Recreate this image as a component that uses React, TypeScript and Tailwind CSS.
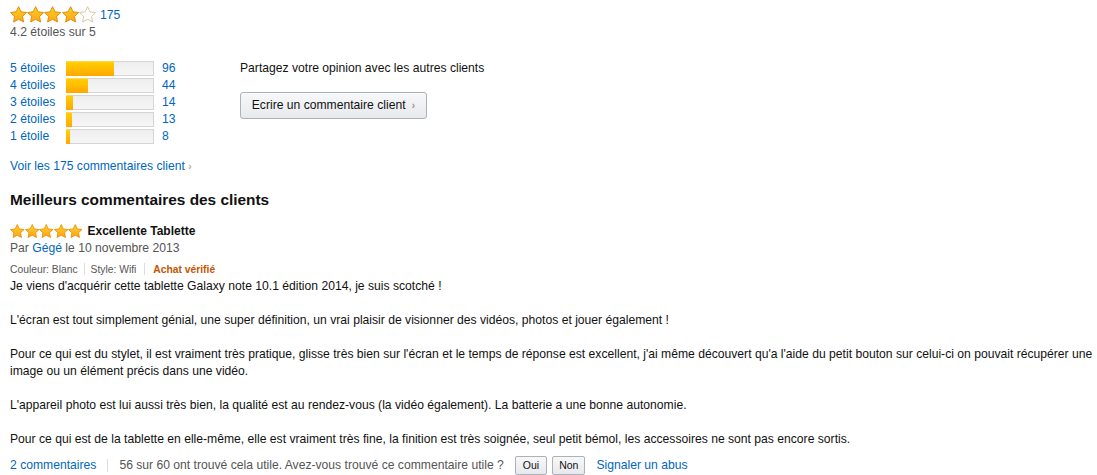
import React from "react";

const STAR = "M12 1.6l3.1 6.6 7.2.9-5.3 5 1.4 7.1L12 17.7l-6.4 3.5 1.4-7.1-5.3-5 7.2-.9z";

function Star({ size, filled, id }: { size: number; filled: boolean; id: string }) {
  return (
    <svg width={size} height={size} viewBox="1 1 22 21.5" className="block">
      <defs>
        <linearGradient id={id} x1="0" y1="0" x2="0" y2="1">
          <stop offset="0" stopColor="#ffd21f" />
          <stop offset="1" stopColor="#ffa41c" />
        </linearGradient>
      </defs>
      {filled ? (
        <path d={STAR} fill={`url(#${id})`} stroke="#e08a00" strokeWidth="1.2" strokeLinejoin="round" />
      ) : (
        <path d={STAR} fill="#ffffff" stroke="#d6c39a" strokeWidth="1.2" strokeLinejoin="round" />
      )}
    </svg>
  );
}

function Stars({ count, size, prefix }: { count: number; size: number; prefix: string }) {
  return (
    <div className="flex items-center">
      {[0, 1, 2, 3, 4].map((i) => (
        <Star key={i} size={size} filled={i < count} id={`${prefix}${i}`} />
      ))}
    </div>
  );
}

const rows = [
  { label: "5 étoiles", fill: 48, count: 96 },
  { label: "4 étoiles", fill: 22, count: 44 },
  { label: "3 étoiles", fill: 7, count: 14 },
  { label: "2 étoiles", fill: 6, count: 13 },
  { label: "1 étoile", fill: 4, count: 8 },
];

export default function App() {
  return (
    <div
      className="w-[1097px] h-[475px] bg-white text-[#111] overflow-hidden pl-[10px] pt-[6px] text-[12.15px] leading-[17px]"
      style={{ fontFamily: '"Liberation Sans", Arial, sans-serif' }}
    >
      <div className="flex items-center h-[18px]">
        <Stars count={4} size={17.2} prefix="t" />
        <a className="text-[#0066c0] ml-[4px]">175</a>
      </div>
      <div className="text-[#555] h-[17px]">4.2 étoiles sur 5</div>

      <div className="flex mt-[19px]">
        <div className="w-[230px]">
          {rows.map((r) => (
            <div key={r.label} className="flex items-center h-[17px]">
              <span className="w-[56px] text-[#0066c0]">{r.label}</span>
              <div className="relative w-[88px] h-[15px] border border-[#d5d5d5] bg-gradient-to-b from-[#eeeeee] to-[#f6f6f6]">
                <div
                  className="absolute left-[-1px] top-[-1px] bottom-[-1px] bg-gradient-to-b from-[#ffce00] to-[#ffa700] border-t border-[#ffd94d]"
                  style={{ width: r.fill }}
                />
              </div>
              <span className="ml-[8px] text-[#0066c0]">{r.count}</span>
            </div>
          ))}
        </div>
        <div>
          <div className="h-[17px]">Partagez votre opinion avec les autres clients</div>
          <button className="mt-[15px] h-[27px] w-[187px] flex items-center justify-center border border-[#adb1b8] rounded-[3px] bg-gradient-to-b from-[#f7f8fa] to-[#e7e9ec] text-[#111] text-[12.15px] shadow-[inset_0_1px_0_rgba(255,255,255,0.6)]">
            Ecrire un commentaire client
            <span className="ml-[6px] text-[#999] text-[11px] font-bold">›</span>
          </button>
        </div>
      </div>

      <div className="mt-[13px] text-[#0066c0] h-[17px]">
        Voir les 175 commentaires client <span className="text-[#aaa] text-[10px] font-bold">›</span>
      </div>

      <h3 className="mt-[15px] text-[15.4px] font-bold leading-[20px] text-[#111]">Meilleurs commentaires des clients</h3>

      <div className="mt-[12px] flex items-center h-[18px]">
        <Stars count={5} size={14.5} prefix="r" />
        <span className="ml-[5px] font-bold text-[12px]">Excellente Tablette</span>
      </div>
      <div className="text-[#555] h-[17px]">
        Par <a className="text-[#0066c0]">Gégé</a> le 10 novembre 2013
      </div>
      <div className="flex items-center mt-[5px] h-[14px] text-[10.3px] text-[#555]">
        <span>Couleur: Blanc</span>
        <span className="mx-[6px] h-[12px] w-px bg-[#ddd]" />
        <span>Style: Wifi</span>
        <span className="mx-[8px] h-[12px] w-px bg-[#ddd]" />
        <span className="text-[#c45500] font-bold">Achat vérifié</span>
      </div>

      <div className="mt-[2px] text-[#111] w-[1087px]">
        <p className="h-[34px]">Je viens d'acquérir cette tablette Galaxy note 10.1 édition 2014, je suis scotché !</p>
        <p className="h-[34px]">
          L'écran est tout simplement génial, une super définition, un vrai plaisir de visionner des vidéos, photos et jouer également !
        </p>
        <p className="h-[51px]">
          Pour ce qui est du stylet, il est vraiment très pratique, glisse très bien sur l'écran et le temps de réponse est excellent, j'ai même découvert qu'a l'aide du petit bouton sur celui-ci on pouvait récupérer une image ou un élément précis dans une vidéo.
        </p>
        <p className="h-[34px]">
          L'appareil photo est lui aussi très bien, la qualité est au rendez-vous (la vidéo également). La batterie a une bonne autonomie.
        </p>
        <p className="h-[17px]">
          Pour ce qui est de la tablette en elle-même, elle est vraiment très fine, la finition est très soignée, seul petit bémol, les accessoires ne sont pas encore sortis.
        </p>
      </div>

      <div className="mt-[8px] flex items-center h-[18px]">
        <a className="text-[#0066c0]">2 commentaires</a>
        <span className="mx-[11px] h-[13px] w-px bg-[#ddd]" />
        <span className="text-[#555]">56 sur 60 ont trouvé cela utile. Avez-vous trouvé ce commentaire utile ?</span>
        <button className="ml-[11px] h-[19px] px-[7px] border border-[#adb1b8] rounded-[2px] bg-gradient-to-b from-[#f7f8fa] to-[#e7e9ec] text-[10.5px] text-[#111] leading-[17px]">
          Oui
        </button>
        <button className="ml-[5px] h-[19px] px-[6px] border border-[#adb1b8] rounded-[2px] bg-gradient-to-b from-[#f7f8fa] to-[#e7e9ec] text-[10.5px] text-[#111] leading-[17px]">
          Non
        </button>
        <a className="ml-[11px] text-[#0066c0]">Signaler un abus</a>
      </div>
    </div>
  );
}
